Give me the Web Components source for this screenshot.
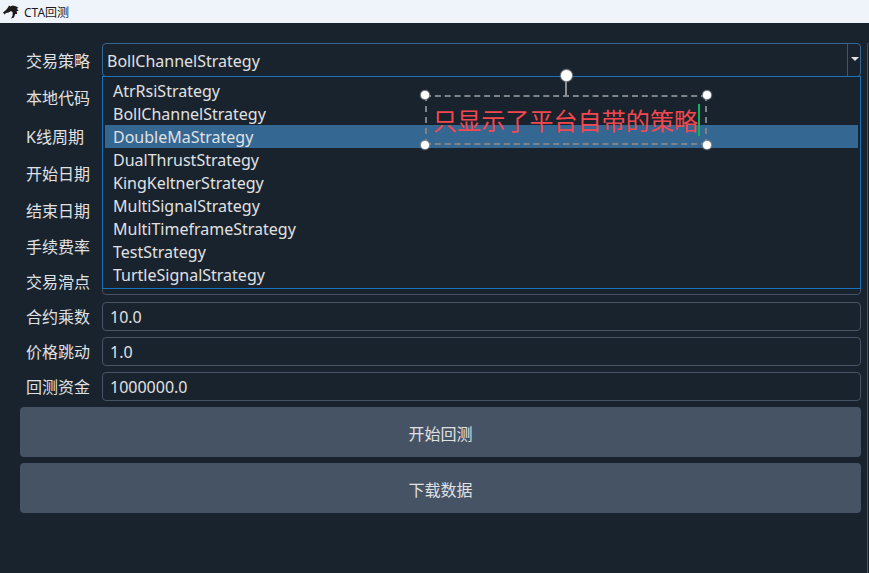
<!DOCTYPE html>
<html><head><meta charset="utf-8"><style>
html,body{margin:0;height:100%;background:#19232d}
body{font:16px "Noto Sans","Noto Sans CJK SC",sans-serif;color:#e0e1e3;overflow:hidden}
</style></head><body>
<cta-app>
  <title-bar slot="title">CTA回测</title-bar>
  <backtest-form>
    <form-row label="交易策略" h="34" gap="0" dy="2"><combo-box value="BollChannelStrategy" open></combo-box></form-row>
    <form-row label="本地代码" h="34" gap="4"><text-field></text-field></form-row>
    <form-row label="K线周期" h="34" gap="5"><text-field></text-field></form-row>
    <form-row label="开始日期" h="34" gap="3"><text-field></text-field></form-row>
    <form-row label="结束日期" h="34" gap="3"><text-field></text-field></form-row>
    <form-row label="手续费率" h="32" gap="3"><text-field></text-field></form-row>
    <form-row label="交易滑点" h="28" gap="4" dy="2"><text-field></text-field></form-row>
    <form-row label="合约乘数" h="29" gap="7"><text-field>10.0</text-field></form-row>
    <form-row label="价格跳动" h="29" gap="6"><text-field>1.0</text-field></form-row>
    <form-row label="回测资金" h="29" gap="6"><text-field>1000000.0</text-field></form-row>
    <action-button>开始回测</action-button>
    <action-button>下载数据</action-button>
    <strategy-popup slot="overlay" selected="2" items="AtrRsiStrategy,BollChannelStrategy,DoubleMaStrategy,DualThrustStrategy,KingKeltnerStrategy,MultiSignalStrategy,MultiTimeframeStrategy,TestStrategy,TurtleSignalStrategy"></strategy-popup>
    <annotation-box slot="overlay">只显示了平台自带的策略</annotation-box>
  </backtest-form>
</cta-app>
<script>
function def(name, html, init){
  customElements.define(name, class extends HTMLElement{
    constructor(){super();this.attachShadow({mode:'open'}).innerHTML=html;}
    connectedCallback(){init&&init.call(this,this.shadowRoot);}
  });
}
def('cta-app',`<style>
:host{display:flex;flex-direction:column;height:573px;width:869px;overflow:hidden;background:#19232d}
.main{flex:1;display:flex;min-height:0;padding:20px 0 0 20px;gap:6px}
.dock{flex:1;border:1px solid #455364;border-right:0;border-bottom:0;border-top-left-radius:4px;box-sizing:border-box;margin-bottom:-4px}
::slotted(backtest-form){width:841px}
</style><slot name="title"></slot><div class="main"><slot></slot><div class="dock"></div></div>`);
def('title-bar',`<style>
:host{display:flex;align-items:center;gap:5px;height:23px;background:#eff4fb;color:#1b1b1b;font:12px "Noto Sans","Noto Sans CJK SC",sans-serif;padding-left:3px;box-sizing:border-box;flex:none}
svg{width:16px;height:14px;flex:none}
</style><svg viewBox="0 0 16 14"><path fill="#1d1a1a" d="M0 7.5 3 5 5 2.5 6 .5 7.5 1.6 9.5 .6 13 1.2 15.6 3 13.8 3.4 15.6 6 13.6 6 14.2 9 12.2 9 11 12.4 8 13.6 9.6 10.4 9.6 7.2 8 6 5.6 7.6 3 8 1.6 9.6Z"/></svg><slot></slot>`);
def('backtest-form',`<style>
:host{display:block;position:relative}
.col{display:flex;flex-direction:column}
</style><div class="col"><slot></slot></div><slot name="overlay"></slot>`);
def('form-row',`<style>
:host{display:grid;grid-template-columns:82px 1fr;align-items:center;flex:none}
label{padding-left:6px;white-space:nowrap;font-family:"Noto Sans","Noto Sans CJK SC",sans-serif;line-height:1}
.f{display:flex;height:100%;min-width:0}
::slotted(*){flex:1}
</style><label></label><div class="f"><slot></slot></div>`,function(s){
  const l=s.querySelector('label');
  l.textContent=this.getAttribute('label');
  if(this.hasAttribute('dy')) l.style.paddingTop=this.getAttribute('dy')+'px';
  this.style.height=this.getAttribute('h')+'px';
  this.style.marginTop=this.getAttribute('gap')+'px';
});
def('text-field',`<style>
:host{display:flex;align-items:center;box-sizing:border-box;border:1px solid #455364;border-radius:4px;padding-left:7px;min-width:0}
</style><slot></slot>`);
def('combo-box',`<style>
:host{display:flex;box-sizing:border-box;border:1px solid #346792;border-radius:4px;min-width:0}
.v{flex:1;display:flex;align-items:center;padding:2px 0 0 4px}
.b{width:12px;border-left:1px solid #455364;display:flex;align-items:center;justify-content:center}
i{display:block;width:0;height:0;border:4px solid transparent;border-top:4px solid #e0e1e3;border-bottom:0;margin:-2px 0 0 1px}
</style><div class="v"></div><div class="b"><i></i></div>`,function(s){s.querySelector('.v').textContent=this.getAttribute('value');});
def('action-button',`<style>
:host{display:flex;align-items:center;justify-content:center;height:50px;margin-top:6px;background:#455364;border-radius:4px;flex:none;font-family:"Noto Sans","Noto Sans CJK SC",sans-serif;box-sizing:border-box;padding-top:2px}
</style><slot></slot>`);
def('strategy-popup',`<style>
:host{position:absolute;left:82px;top:33px;width:759px;box-sizing:border-box;border:1px solid #1a72bb;background:#19232d;padding:2px}
div{height:23px;line-height:25px;padding-left:8px;overflow:hidden}
.s{background:#346792}
</style><section></section>`,function(s){
  const sel=+this.getAttribute('selected');
  s.querySelector('section').innerHTML=this.getAttribute('items').split(',').map((t,i)=>`<div class="${i==sel?'s':''}">${t}</div>`).join('');
});
def('annotation-box',`<style>
:host{position:absolute;left:405px;top:52px;width:282px;height:50px;box-sizing:border-box;border:2px dashed #7d8388;font:24px "Noto Sans CJK SC",sans-serif;color:#f4474f;white-space:nowrap}
.t{position:absolute;left:6px;top:5px;line-height:36px;letter-spacing:.1px}
.c{position:absolute;left:271px;top:7px;width:2px;height:32px;background:#0fb35a}
.h{position:absolute;width:8px;height:8px;border-radius:50%;background:#fff;box-shadow:0 0 1px 1px #8a8f93}
.r{position:absolute;left:133.5px;top:-27px;width:11px;height:11px;border-radius:50%;background:#fff;box-shadow:0 0 1px 1px #8a8f93}
.l{position:absolute;left:138px;top:-16px;width:2px;height:15px;background:#8a8f93}
</style><div class="l"></div><div class="r"></div>
<div class="h" style="left:-6px;top:-6px"></div><div class="h" style="right:-6px;top:-6px"></div>
<div class="h" style="left:-6px;bottom:-6px"></div><div class="h" style="right:-6px;bottom:-6px"></div>
<div class="t"><slot></slot></div><div class="c"></div>`);
</script>
</body></html>
